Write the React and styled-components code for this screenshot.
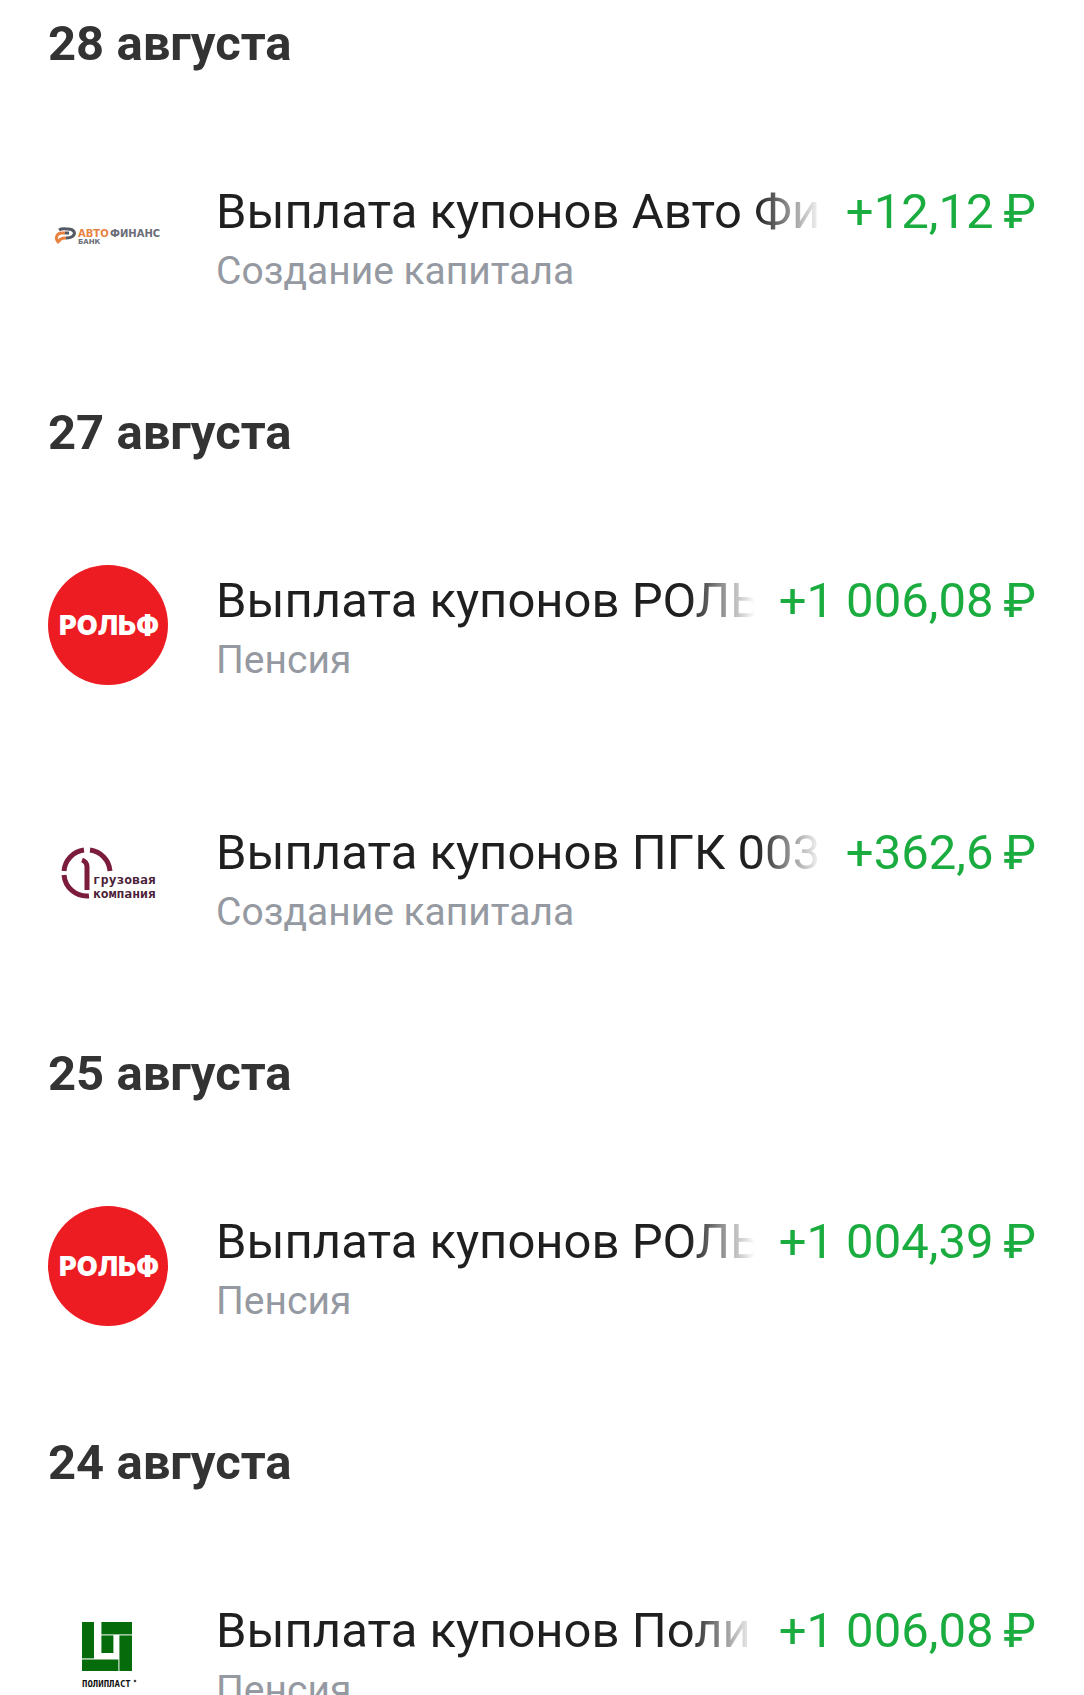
import React from "react";
import styled, { createGlobalStyle } from "styled-components";

const GlobalStyle = createGlobalStyle`
  body {
    margin: 0;
    background: #fff;
    font-family: Roboto, "Liberation Sans", sans-serif;
  }
`;

const Feed = styled.main`
  height: 100vh;
  overflow-y: auto;
  scrollbar-width: none;
`;

const DayTitle = styled.h2`
  margin: 0;
  padding: 41px 48px 36px;
  font-size: 49px;
  line-height: 60px;
  font-weight: 700;
  color: #333;

  section:first-child > & {
    padding-top: 14px;
  }
`;

const List = styled.ul`
  margin: 0;
  padding: 0;
  list-style: none;
`;

const Row = styled.li`
  display: flex;
  align-items: flex-start;
  gap: 48px;
  padding: 66px 48px;
`;

const Logo = styled.svg`
  flex: none;
  width: 120px;
  height: 120px;
`;

const Details = styled.div`
  flex: 1;
  min-width: 0;
  padding-top: 6px;
`;

const TopLine = styled.div`
  display: flex;
  gap: 24px;
  font-size: 49px;
  line-height: 60px;
`;

// long names fade out before the amount
const Name = styled.span`
  flex: 1;
  min-width: 0;
  overflow: hidden;
  white-space: nowrap;
  color: #1f1f1f;
  mask-image: linear-gradient(to left, transparent, #000 66px);
`;

const Amount = styled.span`
  flex: none;
  white-space: nowrap;
  color: #1aac3f;
`;

const Account = styled.div`
  margin-top: 5px;
  font-size: 39px;
  line-height: 48px;
  color: #9599a1;
`;

const AvtoLogo = () => (
  <Logo viewBox="0 0 120 120" role="img" aria-label="Авто Финанс Банк">
    <g fill="none" strokeWidth="3">
      <path d="M11 67 C6 62 9 57 14 57 H17" stroke="#e8823f" />
      <path d="M11 66 C11 63 13 62 18 62" stroke="#e8823f" />
      <path d="M11 54 C14 52 18 53 20 53 C26 53 28 57 25 60 C23 62 21 62 18 62" stroke="#555963" />
      <path d="M17 57 H21" stroke="#555963" />
    </g>
    <g fontFamily="DejaVu Sans, sans-serif" fontWeight="700">
      <text x="30" y="61" fontSize="10" fill="#e8823f">АВТО</text>
      <text x="62" y="61" fontSize="10" fill="#6a6d77">ФИНАНС</text>
      <text x="30" y="68" fontSize="7" fill="#6a6d77">БАНК</text>
    </g>
  </Logo>
);

const RolfLogo = () => (
  <Logo viewBox="0 0 120 120" role="img" aria-label="Рольф">
    <circle cx="60" cy="60" r="60" fill="#ed1c22" />
    <text
      x="61"
      y="70"
      textAnchor="middle"
      fontFamily="Inter, sans-serif"
      fontWeight="900"
      fontSize="27"
      fill="#fff"
    >
      РОЛЬФ
    </text>
  </Logo>
);

const PgkLogo = () => (
  <Logo viewBox="0 0 120 120" role="img" aria-label="Первая грузовая компания">
    <g fill="none" stroke="#7c1c3c" strokeWidth="5">
      <path d="M16 54 A23 23 0 0 1 36 33" />
      <path d="M42 33 A23 23 0 0 1 62 54" />
      <path d="M16 58 A23 23 0 0 0 41 79" />
      <path d="M34 43 C37 44 39 46 39 50 V73" />
    </g>
    <g fontFamily="DejaVu Sans Mono, monospace" fontWeight="700" fontSize="13" fill="#4a2038">
      <text x="45" y="67">грузовая</text>
      <text x="45" y="81">компания</text>
    </g>
  </Logo>
);

const PolyplastLogo = () => (
  <Logo viewBox="0 0 120 120" role="img" aria-label="Полипласт">
    <g fill="#066b0b">
      <path d="M34 27 H46 V63.4 H34 Z" />
      <path d="M34 64.4 H70.4 V76 H34 Z" />
      <path d="M53.4 27 H84 V39.4 H53.4 Z" />
      <path d="M71.4 40.4 H84 V76 H71.4 Z" />
      <path d="M53.4 40.4 H65.4 V58 H53.4 Z" />
    </g>
    <text x="34" y="92" fontFamily="DejaVu Sans Mono, monospace" fontWeight="700" fontSize="9" fill="#111">
      ПОЛИПЛАСТ
    </text>
    <circle cx="87" cy="86" r="1.3" fill="#444" />
  </Logo>
);

const days = [
  {
    date: "28 августа",
    items: [
      { logo: AvtoLogo, name: "Выплата купонов Авто Фи", amount: "+12,12", account: "Создание капитала" },
    ],
  },
  {
    date: "27 августа",
    items: [
      { logo: RolfLogo, name: "Выплата купонов РОЛЬ", amount: "+1 006,08", account: "Пенсия" },
      { logo: PgkLogo, name: "Выплата купонов ПГК 003", amount: "+362,6", account: "Создание капитала" },
    ],
  },
  {
    date: "25 августа",
    items: [
      { logo: RolfLogo, name: "Выплата купонов РОЛЬ", amount: "+1 004,39", account: "Пенсия" },
    ],
  },
  {
    date: "24 августа",
    items: [
      { logo: PolyplastLogo, name: "Выплата купонов Поли", amount: "+1 006,08", account: "Пенсия" },
    ],
  },
];

function App() {
  return (
    <Feed>
      <GlobalStyle />
      {days.map((day) => (
        <section key={day.date}>
          <DayTitle>{day.date}</DayTitle>
          <List>
            {day.items.map(({ logo: Icon, name, amount, account }) => (
              <Row key={name}>
                <Icon />
                <Details>
                  <TopLine>
                    <Name>{name}</Name>
                    <Amount>{amount}{"\u2009"}₽</Amount>
                  </TopLine>
                  <Account>{account}</Account>
                </Details>
              </Row>
            ))}
          </List>
        </section>
      ))}
    </Feed>
  );
}

export default App;
